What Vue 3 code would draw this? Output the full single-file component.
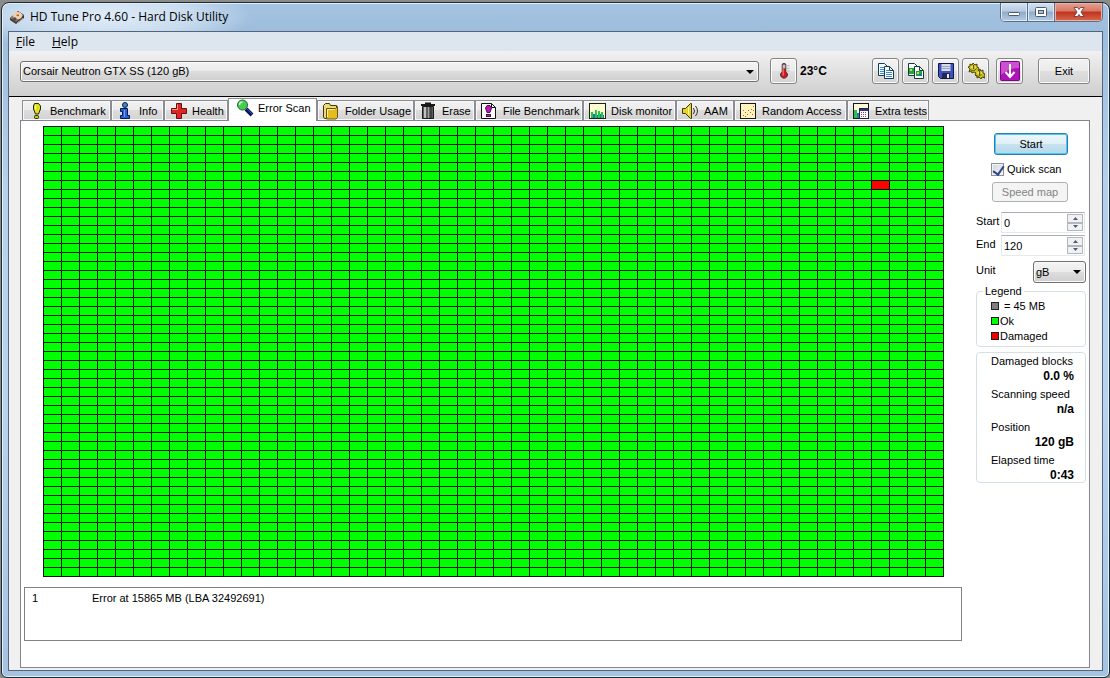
<script setup>
import { ref } from 'vue'

const tabs = ['Benchmark', 'Info', 'Health', 'Error Scan', 'Folder Usage', 'Erase', 'File Benchmark', 'Disk monitor', 'AAM', 'Random Access', 'Extra tests']
const active = ref('Error Scan')
const drive = ref('Corsair Neutron GTX SS (120 gB)')
const unit = ref('gB')
const quick = ref(true)
const start = ref(0)
const end = ref(120)
const cellCount = 50 * 50
const damaged = 6 * 50 + 46
const errors = [{ id: 1, text: 'Error at 15865 MB (LBA 32492691)' }]
const stats = [
  { label: 'Damaged blocks', value: '0.0 %' },
  { label: 'Scanning speed', value: 'n/a' },
  { label: 'Position', value: '120 gB' },
  { label: 'Elapsed time', value: '0:43' }
]
</script>

<template>
  <div class="desktop">
    <div class="window">
      <header class="titlebar">
        <svg class="app-icon" viewBox="0 0 16 16" aria-hidden="true">
          <path d="M1 9 9 2l6 4v3l-8 6-6-4z" fill="#3a3432" />
          <path d="M1 9 9 2l6 4-8 7z" fill="#8c7a6e" />
          <ellipse cx="8.6" cy="6.6" rx="4.6" ry="3.6" fill="#f3cfae" />
          <ellipse cx="8.8" cy="6.2" rx="1.3" ry="1" fill="#b0622e" />
          <path d="m3 10 3-2 2 2-2 2z" fill="#554a48" />
          <path d="m8 14 6-5" stroke="#a89c94" />
        </svg>
        <h1>HD Tune Pro 4.60 - Hard Disk Utility</h1>
        <div class="caption">
          <button class="cap min" aria-label="Minimize">
            <svg viewBox="0 0 14 12"><rect x="1.5" y="6.5" width="11" height="3" rx="1" fill="#fff" stroke="#4b5a70" /></svg>
          </button>
          <button class="cap max" aria-label="Maximize">
            <svg viewBox="0 0 14 12"><rect x="1.5" y="1.5" width="11" height="9" rx="1" fill="#fff" stroke="#4b5a70" /><rect x="4.5" y="4.5" width="5" height="3" fill="#a9c0da" stroke="#4b5a70" /></svg>
          </button>
          <button class="cap close" aria-label="Close">
            <svg viewBox="0 0 14 12"><path d="M2 1.500h3.500L7 3.500l1.500-2H12L9 6l3 4.500H8.500L7 8.500l-1.500 2H2L5 6z" fill="#fff" stroke="#5a3038" stroke-width=".8" /></svg>
          </button>
        </div>
      </header>

      <div class="client">
        <nav class="menu">
          <button><u>F</u>ile</button>
          <button><u>H</u>elp</button>
        </nav>

        <div class="toolbar">
          <span class="select drive">
            <select v-model="drive" aria-label="Drive"><option>Corsair Neutron GTX SS (120 gB)</option></select>
            <svg viewBox="0 0 8 4"><path d="M0 0h8L4 4z" fill="#000" /></svg>
          </span>
          <button class="tool" aria-label="Temperature">
            <svg viewBox="0 0 18 20">
              <path d="M7 2.500Q9 .5 11 2.500V11q3 2 1.500 5Q9 20 5.500 16 4 13 7 11z" fill="#d81820" stroke="#40282c" />
              <path d="M7.500 3h3v4h-3z" fill="#9fd0d8" />
              <path d="M8 7v8" stroke="#ff9a9a" />
              <path d="M12 4h3M12 7h3M12 10h3" stroke="#b4b4b4" />
            </svg>
          </button>
          <span class="temp">23°C</span>
          <button class="tool" aria-label="Copy text">
            <svg viewBox="0 0 18 18">
              <path d="M1.500 1.500h6l3 3v9h-9z" fill="#f4faff" stroke="#123c50" />
              <path d="M3 5.500h5M3 7.500h5M3 9.500h5M3 11.500h5" stroke="#3c8ad0" />
              <path d="M7.500 4.500h5l4 4v8h-9z" fill="#fff" stroke="#123c50" />
              <path d="M12.500 4.500v4h4" fill="none" stroke="#123c50" />
              <path d="M9 8.500h3M9 10.500h6M9 12.500h6M9 14.500h6" stroke="#3c8ad0" />
            </svg>
          </button>
          <button class="tool" aria-label="Copy picture">
            <svg viewBox="0 0 18 18">
              <path d="M1.500 1.500h6l3 3v9h-9z" fill="#f4fff8" stroke="#123c38" />
              <path d="M2 6h5v6H2z" fill="#28a43c" />
              <path d="M7.500 4.500h5l4 4v8h-9z" fill="#fff" stroke="#123c38" />
              <path d="M12.500 4.500v4h4" fill="none" stroke="#123c38" />
              <path d="M9 9h6v5H9z" fill="#28a43c" /><path d="M10 10h2v2h-2zM3 7h2v2H3z" fill="#b8e070" /><path d="M12 12h3v2h-3z" fill="#2670a0" />
            </svg>
          </button>
          <button class="tool" aria-label="Save">
            <svg viewBox="0 0 18 18">
              <path d="M1.500 1.500h15v15h-13l-2-2z" fill="#4050c0" stroke="#101840" />
              <path d="M4.500 2h9v7h-9z" fill="#d4dcec" /><path d="M5 4.500h8M5 6.500h8" stroke="#98a4c0" />
              <path d="M5 11h8v5H5z" fill="#202850" /><path d="M10 12h2v4h-2z" fill="#e8ecf4" />
            </svg>
          </button>
          <button class="tool" aria-label="Options">
            <svg viewBox="0 0 18 18">
              <path d="m1 5 2-1V2l2 1 1-2 2 2 2-1v3l2 1-1 2 1 1 1-2 1 2 2-1v3l2 1-1 2 1 2-3-1-1 2-2-2-2 1v-2l-2-1 1-2-2-1-2 1-1-2-2 1 1-3z" fill="#d0c41c" stroke="#4a4408" />
              <path d="M3.500 7.500q3 3 6-1M8.500 13.500q3 2 6-1M6.500 3v4M12.500 9v4" stroke="#5c5408" fill="none" />
              <path d="M4 5h2M8 5h1M10 11h2M14 11h1" stroke="#fff89c" />
            </svg>
          </button>
          <button class="tool download" aria-label="Download">
            <svg viewBox="0 0 20 20">
              <rect x=".5" y=".5" width="19" height="19" rx="1" fill="#b012ba" stroke="#780a80" />
              <path d="M1 1h18v6Q9 7 1 14z" fill="#cb50d2" />
              <path d="M10 3v12M5.500 11l4.500 5 4.500-5" stroke="#fff" stroke-width="2" fill="none" />
            </svg>
          </button>
          <button class="tool exit">Exit</button>
        </div>

        <div class="tabs" role="tablist">
          <button v-for="t in tabs" :key="t" class="tab" :class="{ active: t === active }" role="tab" :aria-selected="t === active" @click="active = t">
            <svg viewBox="0 0 18 18" aria-hidden="true">
              <g v-if="t === 'Benchmark'" stroke="#222208">
                <path d="M6.500 1.500h4l2 2.500v3l-2 5h-3l-2-5V4z" fill="#e0e018" />
                <path d="M7.500 3.500v4" stroke="#ffffb0" /><rect x="6.500" y="13.500" width="4" height="3" rx="1" fill="#c8c818" />
              </g>
              <g v-else-if="t === 'Info'" stroke="#0a1850">
                <circle cx="8" cy="3" r="2.500" fill="#3e8fb8" />
                <path d="M3.500 6.500h7v7h2v3h-9v-3h2v-4h-2z" fill="#2460d8" /><path d="M7.500 8v7" stroke="#6ca4ff" />
              </g>
              <g v-else-if="t === 'Health'">
                <path d="M6.500 1.500h5v5h5v5h-5v5h-5v-5h-5v-5h5z" fill="#e02424" stroke="#641010" /><path d="M7.500 8V2.500M2 7.500h5" stroke="#ff8a80" />
              </g>
              <g v-else-if="t === 'Error Scan'">
                <path d="m10 10 6 6" stroke="#0c1458" stroke-width="4" /><path d="m11 10 5 5" stroke="#2b58c8" stroke-width="1" />
                <circle cx="6.500" cy="6" r="5" fill="#48cc50" stroke="#206838" /><path d="M3.500 6q0-3 3-3" stroke="#c8ffc8" stroke-width="1.500" fill="none" />
              </g>
              <g v-else-if="t === 'Folder Usage'">
                <path d="M.5 15V3.500l2-2h4l1 2h6V15l-1 1.500h-11z" fill="#f0d878" stroke="#403808" />
                <path d="M3.500 6.500h9l2-2v11l-1.500 1.500H3.500z" fill="#e4bc20" stroke="#685408" /><path d="M4.500 15V7.500h7" stroke="#fff0a0" fill="none" />
              </g>
              <g v-else-if="t === 'Erase'">
                <path d="M1 3h14M5 1.500h6" stroke="#181818" stroke-width="2" /><path d="M2.500 4.500h11v12h-11z" fill="#606060" stroke="#181818" />
                <path d="M5 5v11" stroke="#c0c0c0" stroke-width="2" /><path d="M8.500 5v11" stroke="#a4a4a4" /><path d="M11 5v11" stroke="#222" />
              </g>
              <g v-else-if="t === 'File Benchmark'">
                <path d="M.5 1.500h10l4 4v11H.5z" fill="#fff" stroke="#101010" /><path d="M10.500 1.500v4h4" fill="none" stroke="#101010" />
                <path d="M6 3.500h3L10.500 6 9 10.500H6L4.500 6z" fill="#b818b0" stroke="#501050" /><rect x="5.500" y="12.500" width="4" height="2" fill="#b818b0" stroke="#501050" />
              </g>
              <g v-else-if="t === 'Disk monitor'">
                <rect x=".5" y="1.500" width="16" height="15" fill="#fffbd0" stroke="#202010" />
                <path d="M2 16V10h2v6zM6 16V8h2v8zM9 16V9h2v7zM12 16v-6h2v6z" fill="#24c848" /><path d="M4 16v-4h2v4zM8 16v-3h1v3zM11 16v-4h1v4zM14 16v-3h1v3z" fill="#2474b8" />
              </g>
              <g v-else-if="t === 'AAM'">
                <path d="M.5 6.500h3l5-5h1v15h-1l-5-5h-3z" fill="#e4d428" stroke="#403808" /><path d="M6.500 5v8" stroke="#fff8a0" />
                <path d="M11.500 6q2 3 0 6M13.500 4q4 5 0 10" stroke="#303018" fill="none" />
              </g>
              <g v-else-if="t === 'Random Access'">
                <rect x=".5" y="1.500" width="15" height="15" fill="#fff4c0" stroke="#181818" />
                <path d="M3 13.500h1M5 10.500h1M7 12.500h1M8 8.500h1M10 10.500h1M11 7.500h1M13 8.500h1M13 4.500h1M3 8.500h1M12 12.500h1M5 14.500h1" stroke="#a06c10" />
              </g>
              <g v-else>
                <rect x=".5" y="1.500" width="15" height="15" fill="#fffbd8" stroke="#181818" /><path d="M1 8h3v8H1z" fill="#28c050" /><path d="M4 11h2v5H4z" fill="#2878c0" />
                <rect x="6.500" y="6.500" width="9" height="10" fill="#fff" stroke="#20204c" /><path d="M7 8h8" stroke="#34347c" stroke-width="2" /><path d="M8 10.500h6M8 12.500h6M8 14.500h6" stroke="#a03880" stroke-dasharray="1 1" />
              </g>
            </svg>
            <span>{{ t }}</span>
          </button>
        </div>

        <main class="panel">
          <div class="scan">
            <div class="blocks">
              <i v-for="n in cellCount" :key="n" :class="{ bad: n - 1 === damaged }"></i>
            </div>
            <ul class="log">
              <li v-for="e in errors" :key="e.id"><span>{{ e.id }}</span><span class="message">{{ e.text }}</span></li>
            </ul>
          </div>

          <aside class="side">
            <button class="start">Start</button>
            <label class="quick"><input v-model="quick" type="checkbox"><span>Quick scan</span></label>
            <button class="speed" disabled>Speed map</button>

            <div class="field">
              <label for="start">Start</label>
              <span class="spin">
                <input id="start" v-model="start" type="text">
                <button aria-label="Increase start" @click="start++"><svg viewBox="0 0 5 3"><path d="M0 3h5L2.500 0z" /></svg></button>
                <button aria-label="Decrease start" @click="start--"><svg viewBox="0 0 5 3"><path d="M0 0h5L2.500 3z" /></svg></button>
              </span>
            </div>
            <div class="field">
              <label for="end">End</label>
              <span class="spin">
                <input id="end" v-model="end" type="text">
                <button aria-label="Increase end" @click="end++"><svg viewBox="0 0 5 3"><path d="M0 3h5L2.500 0z" /></svg></button>
                <button aria-label="Decrease end" @click="end--"><svg viewBox="0 0 5 3"><path d="M0 0h5L2.500 3z" /></svg></button>
              </span>
            </div>
            <div class="field unit">
              <label for="unit">Unit</label>
              <span class="select">
                <select id="unit" v-model="unit"><option>gB</option><option>MB</option></select>
                <svg viewBox="0 0 8 4"><path d="M0 0h8L4 4z" fill="#000" /></svg>
              </span>
            </div>

            <fieldset class="legend">
              <legend>Legend</legend>
              <p class="size"><b class="gray"></b>= 45 MB</p>
              <p><b class="ok"></b>Ok</p>
              <p><b class="damaged"></b>Damaged</p>
            </fieldset>

            <dl class="stats">
              <div v-for="s in stats" :key="s.label"><dt>{{ s.label }}</dt><dd>{{ s.value }}</dd></div>
            </dl>
          </aside>
        </main>
      </div>
    </div>
  </div>
</template>

<style>
body { margin: 0; background: #8b8c87; }
</style>

<style scoped>
* { box-sizing: border-box; }
button, select, input { font: inherit; color: inherit; padding: 0; margin: 0; border: 0; background: none; border-radius: 0; }
svg { display: block; }
p, h1, ul, dl, dd { margin: 0; padding: 0; }

.desktop {
  min-height: 100vh;
  padding: 2px 0 0 1px;
  display: flex;
  font: 11px/14px "Liberation Sans", Arial, sans-serif;
  color: #000;
}
.window {
  flex: 1;
  min-width: 0;
  display: flex;
  flex-direction: column;
  border: 1px solid #1c2a38;
  border-radius: 8px 8px 6px 6px;
  padding: 0 6px 6px;
  box-shadow: inset 0 0 0 1px #e2f0fb;
  background:
    radial-gradient(ellipse 150px 34px at 100px 14px, rgba(240, 247, 254, .8), rgba(240, 247, 254, .5) 60%, rgba(240, 247, 254, 0)) no-repeat,
    linear-gradient(#a6c4e2, #9dbddc 29px, #b4d0ea 180px, #b7d3ee 60%, #a5c3e1);
}
.titlebar { display: flex; height: 28px; align-items: center; }
.app-icon { width: 16px; height: 16px; margin-left: 1px; }
h1 { flex: 1; margin-left: 5px; font: 12px/16px "Open Sans", sans-serif; }
.caption { display: flex; align-self: flex-start; border: 1px solid #5c6f86; border-top: 0; border-radius: 0 0 5px 5px; overflow: hidden; }
.cap { width: 27px; height: 18px; display: grid; place-items: center; background: linear-gradient(#d5e2f0, #b8cbe0 45%, #91abc8 50%, #b5cce4); border-right: 1px solid #5c6f86; box-shadow: inset 0 0 0 1px #dce9f6; }
.cap svg { width: 14px; height: 12px; }
.cap.close { width: 47px; border: 0; background: linear-gradient(#e8a090, #d77664 45%, #bd321f 50%, #d8684c); box-shadow: inset 0 0 0 1px #eeb0a0; }

.client { flex: 1; display: flex; flex-direction: column; border: 1px solid #52657c; background: #f0f0f0; }
.menu { display: flex; gap: 17px; padding: 0 7px; height: 19px; background: #dde5ee; font: 12px/18px "Open Sans", sans-serif; }
.menu u { text-underline-offset: 1px; }
.toolbar { display: flex; align-items: center; padding: 7px 12px 12px 11px; background: linear-gradient(#f1f1f1, #cecece); border-bottom: 1px solid #000; }
.select { position: relative; display: block; height: 21px; border: 1px solid #707070; border-radius: 3px; background: linear-gradient(#f3f3f3, #ebebeb 48%, #dddddd 50%, #cfcfcf); box-shadow: inset 0 0 0 1px #fafafa; }
.select select { appearance: none; display: block; width: 100%; height: 100%; padding-left: 2px; outline: 0; }
.select svg { position: absolute; right: 4px; top: 8px; width: 8px; height: 4px; pointer-events: none; }
.drive { flex: 1; margin-right: 11px; }
.tool { width: 27px; height: 26px; margin-right: 3px; display: grid; place-items: center; border: 1px solid #858585; border-radius: 3px; background: linear-gradient(#f3f3f3, #ebebeb 48%, #dfdfdf 50%, #d4d4d4); box-shadow: inset 0 0 0 1px #fafafa; }
.tool svg { width: 18px; height: 18px; }
.temp { width: 72px; font: bold 12px/16px "Liberation Sans", Arial, sans-serif; }
.download { margin-left: 4px; margin-right: 15px; }
.tool.download svg { width: 20px; height: 20px; }
.exit { width: 52px; margin-right: 0; }

.tabs { display: grid; grid-template-columns: 89px 53px 64px 89px 97px 61px 108px 93px 58px 113px 82px; align-items: end; height: 23px; padding-left: 13px; }
.tab { display: flex; align-items: center; gap: 4px; height: 20px; padding-left: 5px; white-space: nowrap; border: 1px solid #8b8c94; border-width: 1px 1px 0; background: linear-gradient(#f2f2f2, #ebebeb 48%, #dddddd 50%, #d2d2d2); box-shadow: inset 0 0 0 1px #f8f8f8; }
.tab svg { width: 18px; height: 18px; flex: none; }
.tab.active { position: relative; height: 23px; margin-bottom: -1px; padding: 0 0 4px 7px; background: #fff; box-shadow: none; }

.panel { flex: 1; display: flex; gap: 14px; margin: 0 12px 2px 11px; padding: 5px 3px 0; background: #fff; border: 1px solid #83868c; }
.scan { flex: 1; min-width: 0; }
.blocks { display: grid; grid-template-columns: repeat(50, minmax(0, 1fr)); grid-auto-rows: 9px; margin: 0 18px 10px 19px; border: 1px solid #001a00; border-width: 1px 0 0 1px; }
.blocks i { background: #00ff00; border: 1px solid #001a00; border-width: 0 1px 1px 0; }
.blocks .bad { background: #ff0000; }
.log { min-height: 54px; border: 1px solid #828282; list-style: none; padding: 3px 7px; }
.log li { display: flex; }
.log li span { width: 60px; }
.log li .message { width: auto; }

.side { width: 110px; display: flex; flex-direction: column; }
.start { width: 74px; height: 22px; margin: 7px 0 7px 18px; border: 1px solid #2c7fa8; border-radius: 3px; background: linear-gradient(#eef6fa, #e0eff7 48%, #c8e2ef 50%, #b4d8ea); box-shadow: inset 0 0 0 1px #4cc9f0; }
.quick { display: flex; align-items: center; gap: 3px; height: 14px; margin-left: 15px; }
.quick input { appearance: none; width: 13px; height: 13px; border: 1px solid #8e8f8f; background: linear-gradient(135deg, #cfd5de, #f6f6f6); box-shadow: inset 0 0 0 1px #f4f4f4; }
.quick input:checked::after { content: ""; display: block; width: 5px; height: 9px; margin: 0 0 0 3px; border: solid #31478f; border-width: 0 2px 2px 0; transform: rotate(35deg); }
.speed { width: 76px; height: 20px; margin: 6px 0 10px 16px; border: 1px solid #adb2b5; border-radius: 3px; background: #f4f4f4; color: #838383; }
.field { display: flex; justify-content: space-between; margin-bottom: 2px; padding-right: 1px; }
.field label { padding-top: 2px; }
.spin { display: grid; grid-template: 1fr 1fr / 1fr 16px; width: 84px; height: 21px; padding: 1px; border: 1px solid #e3e9ef; border-top-color: #abadb3; }
.spin input { grid-row: 1 / 3; width: 100%; min-width: 0; padding-left: 1px; outline: 0; background: #fff; }
.spin button { display: grid; place-items: center; border: 1px solid #b4b8be; background: #f0f1f3; }
.spin svg { width: 5px; height: 3px; fill: #4c5b78; }
.unit { margin: 3px 0 0; padding-right: 0; }
.unit .select { width: 53px; height: 22px; }

.legend { height: 63px; margin: 1px 0 5px; padding: 0 0 0 14px; min-width: 0; border: 1px solid #d5dfe5; border-radius: 4px; }
.legend legend { margin-left: -8px; padding: 0 2px; line-height: 14px; }
.legend p { display: flex; align-items: center; height: 15px; gap: 1px; }
.legend .size { gap: 5px; }
.legend b { width: 8px; height: 8px; border: 1px solid #202020; }
.gray { background: #808080; }
.ok { background: #00ff00; }
.damaged { background: #f00000; }
.stats { height: 131px; padding: 1px 11px 0 14px; border: 1px solid #d5dfe5; border-radius: 4px; display: flex; flex-direction: column; gap: 2px; }
.stats dd { text-align: right; font: bold 12px/17px "Liberation Sans", Arial, sans-serif; }
</style>
